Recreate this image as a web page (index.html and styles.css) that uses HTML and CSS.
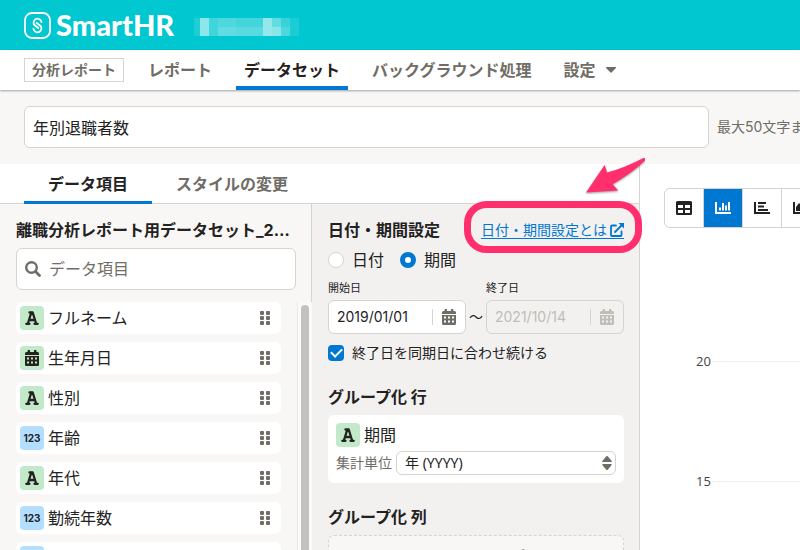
FILE: index.html
```
<!DOCTYPE html>
<html lang="ja">
<head>
<meta charset="utf-8">
<meta name="viewport" content="width=device-width, initial-scale=1">
<title>SmartHR 分析レポート</title>
<link rel="stylesheet" href="styles.css">
</head>
<body>
<svg class="defs" aria-hidden="true">
  <symbol id="cal" viewBox="0 0 14 16"><path d="M3 0h1.6q.4 0 .4.4V2h4V.4Q9 0 9.400 0H11q.4 0 .4.4V2h1.200Q14 2 14 3.500V5H0V3.500Q0 2 1.500 2H2.600V.4Q2.600 0 3 0zM0 6h14v8.500Q14 16 12.500 16h-11Q0 16 0 14.500zM2 7.500v2h2v-2zm4 0v2h2v-2zm4 0v2h2v-2zM2 11.500v2h2v-2zm4 0v2h2v-2zm4 0v2h2v-2z" fill="currentColor" fill-rule="evenodd"/></symbol>
  <symbol id="letter" viewBox="0 0 14 14"><path d="M1.300 12.800H4.500M9.500 12.800H12.700M2.900 12.500L6.300 1.500H7.700L11.100 12.500M4.200 9H9.800M4.500 1.500H7.500" fill="none" stroke="currentColor" stroke-width="2.300" stroke-linecap="round" stroke-linejoin="round"/></symbol>
  <symbol id="grip" viewBox="0 0 10 14"><g fill="currentColor"><rect width="4" height="4" rx="1"/><rect x="6" width="4" height="4" rx="1"/><rect y="5" width="4" height="4" rx="1"/><rect x="6" y="5" width="4" height="4" rx="1"/><rect y="10" width="4" height="4" rx="1"/><rect x="6" y="10" width="4" height="4" rx="1"/></g></symbol>
</svg>

<header class="header">
  <a class="logo" href="#" aria-label="SmartHR">
    <svg width="27" height="27" viewBox="0 0 27 27" fill="none" stroke="#fff"><rect x="1" y="1" width="25" height="25" rx="7" stroke-width="1.800"/><path d="M17.500 10C17 7 13.500 6 11.500 7.200C9 9 9 12 11 13.500L14.300 16M9.500 17C10 20 13.500 21 15.500 19.800C18 18 18 15 16 13.500L12.700 11" stroke-width="1.800" stroke-linecap="round"/></svg>
    <span>SmartHR</span>
  </a>
  <svg class="tenant" width="108" height="18" viewBox="0 0 108 18" fill="#fff" shape-rendering="crispEdges" aria-hidden="true">
    <path d="M0 0h6v18H0z" opacity=".12"/><path d="M6 0h9v18H6z" opacity=".55"/><path d="M15 0h9v18h-9z" opacity=".25"/><path d="M24 0h18v9H24z" opacity=".3"/><path d="M24 9h18v9H24z" opacity=".38"/><path d="M42 0h27v9H42z" opacity=".26"/><path d="M42 9h27v9H42z" opacity=".35"/><path d="M69 0h9v18h-9z" opacity=".58"/><path d="M78 0h9v9h-9z" opacity=".38"/><path d="M78 9h9v9h-9z" opacity=".54"/><path d="M87 0h9v9h-9z" opacity=".22"/><path d="M87 9h9v9h-9z" opacity=".3"/><path d="M96 0h9v18h-9z" opacity=".1"/>
  </svg>
</header>

<nav class="nav">
  <span class="app">分析レポート</span>
  <a href="#">レポート</a>
  <a href="#" class="current">データセット</a>
  <a href="#">バックグラウンド処理</a>
  <a href="#">設定 <svg width="10" height="6" viewBox="0 0 10 6"><path d="M0 .5Q0 0 .5 0h9q.5 0 .5.500Q10 1 9.500 1.500L5.500 5.500Q5 6 4.500 5.500L.5 1.500Q0 1 0 .5z" fill="currentColor"/></svg></a>
</nav>

<div class="titlebar">
  <input class="box" type="text" value="年別退職者数" aria-label="データセット名">
  <span class="hint">最大50文字まで</span>
</div>

<main class="main">
  <div class="editor">
    <div class="tabs">
      <button type="button" class="current">データ項目</button>
      <button type="button">スタイルの変更</button>
    </div>
    <div class="columns">
      <section class="source">
        <div class="source-head">
          <h2>離職分析レポート用データセット_2021</h2>
          <label class="box search">
            <svg width="16" height="16" viewBox="0 0 16 16" fill="none" stroke="currentColor"><circle cx="6.500" cy="6.500" r="5.300" stroke-width="2.400"/><path d="M10.500 10.500l4 4" stroke-width="2.800" stroke-linecap="round"/></svg>
            <input type="search" placeholder="データ項目" aria-label="データ項目">
          </label>
        </div>
        <div class="scroller">
          <ul>
            <li><span class="badge"><svg width="14" height="14"><use href="#letter"/></svg></span>フルネーム<svg class="grip" width="10" height="14"><use href="#grip"/></svg></li>
            <li><span class="badge"><svg width="14" height="16"><use href="#cal"/></svg></span>生年月日<svg class="grip" width="10" height="14"><use href="#grip"/></svg></li>
            <li><span class="badge"><svg width="14" height="14"><use href="#letter"/></svg></span>性別<svg class="grip" width="10" height="14"><use href="#grip"/></svg></li>
            <li><span class="badge number">123</span>年齢<svg class="grip" width="10" height="14"><use href="#grip"/></svg></li>
            <li><span class="badge"><svg width="14" height="14"><use href="#letter"/></svg></span>年代<svg class="grip" width="10" height="14"><use href="#grip"/></svg></li>
            <li><span class="badge number">123</span>勤続年数<svg class="grip" width="10" height="14"><use href="#grip"/></svg></li>
            <li><span class="badge number"></span></li>
          </ul>
          <div class="track"><div class="thumb"></div></div>
        </div>
      </section>

      <section class="settings">
        <div class="heading">
          <h2>日付・期間設定</h2>
          <a class="help" href="#">日付・期間設定とは<svg width="14" height="14" viewBox="0 0 14 14" fill="none" stroke="currentColor" stroke-width="1.800"><path d="M6 2.500H2Q1 2.500 1 3.500V12Q1 13 2 13h8.500q1 0 1-1V8.500M5 9l7-7" stroke-linecap="round"/><path d="M8.500 0H14v5.500z" fill="currentColor" stroke="none"/></svg></a>
          <svg class="callout" width="184" height="104" viewBox="0 0 184 104" aria-hidden="true">
            <rect x="6.500" y="54.500" width="171" height="45" rx="19" fill="none" stroke="#ff2f6d" stroke-width="7"/>
            <path class="arrow" d="M125 42.500L143.700 15L146 22.500Q161 19 182.500 8Q185 7.500 184 10.500Q171 23 151.600 34.300L157.300 40.500z" fill="#ff2f6d"/>
          </svg>
        </div>
        <div class="radios">
          <label><input type="radio" name="mode">日付</label>
          <label><input type="radio" name="mode" checked>期間</label>
        </div>
        <div class="dates">
          <label for="from">開始日</label><span></span><label for="to">終了日</label>
          <div class="date"><input id="from" type="text" value="2019/01/01"><svg width="14" height="16"><use href="#cal"/></svg></div>
          <span class="tilde">〜</span>
          <div class="date disabled"><input id="to" type="text" value="2021/10/14" disabled><svg width="14" height="16"><use href="#cal"/></svg></div>
        </div>
        <label class="keep"><input type="checkbox" checked>終了日を同期日に合わせ続ける</label>

        <h2 class="group">グループ化 行</h2>
        <div class="card">
          <div class="field"><span class="badge"><svg width="14" height="14"><use href="#letter"/></svg></span>期間</div>
          <div class="unit">
            <label for="unit">集計単位</label>
            <div class="select">
              <select id="unit"><option>年 (YYYY)</option></select>
              <svg width="10" height="14" viewBox="0 0 10 14" fill="currentColor"><path d="M5 0q.4 0 .7.300L9.700 5Q10.200 6 9 6H1Q-.2 6 .3 5L4.300.3Q4.600 0 5 0zM5 14q.4 0 .7-.3L9.700 9Q10.200 8 9 8H1Q-.2 8 .3 9l4 4.700Q4.600 14 5 14z"/></svg>
            </div>
          </div>
        </div>

        <h2 class="group">グループ化 列</h2>
        <div class="drop">ここにドロップ</div>
      </section>
    </div>
  </div>

  <section class="preview">
    <div class="types">
      <button type="button" aria-label="表"><svg width="16" height="14" viewBox="0 0 16 14"><path d="M1.500 0h13Q16 0 16 1.500v11q0 1.500-1.500 1.500h-13Q0 14 0 12.500v-11Q0 0 1.500 0zM2 4v3h5V4zm7 0v3h5V4zM2 9v3h5V9zm7 0v3h5V9z" fill="currentColor" fill-rule="evenodd"/></svg></button>
      <button type="button" class="current" aria-label="棒グラフ"><svg width="16" height="12" viewBox="0 0 16 12" fill="none" stroke="currentColor" stroke-width="2"><path d="M1 0v11h15M5 8.500V5.500M8 8.500V1M11 8.500V3.500M14 8.500V0"/></svg></button>
      <button type="button" aria-label="横棒グラフ"><svg width="16" height="12" viewBox="0 0 16 12" fill="none" stroke="currentColor" stroke-width="2"><path d="M1 0v11h15M4 1h8M4 4.500h6M4 8h10"/></svg></button>
      <button type="button" aria-label="面グラフ"><svg width="16" height="12" viewBox="0 0 16 12"><path d="M1 0v11h15" fill="none" stroke="currentColor" stroke-width="2"/><path d="M3 9V5l3-4 3 3 2-1 3 3v3z" fill="currentColor"/></svg></button>
    </div>
    <div class="chart">
      <div class="tick">20</div>
      <div class="tick">15</div>
    </div>
  </section>
</main>
</body>
</html>
```
FILE: styles.css
```
* { box-sizing: border-box; }

:root {
  --text: #23221e;
  --grey: #706d65;
  --border: #d6d3d0;
  --blue: #0077d1;
  --band: #f8f7f6;
}

body {
  margin: 0;
  height: 100vh;
  display: flex;
  flex-direction: column;
  overflow: hidden;
  background: #fff;
  color: var(--text);
  font: 16px/20px Inter, "Noto Sans CJK JP", sans-serif;
}

input, button, select { font: inherit; color: inherit; margin: 0; }
h2 { margin: 0; font-size: 16px; line-height: 20px; }
ul { margin: 0; padding: 0; list-style: none; }
svg { flex: none; }
.defs { position: absolute; width: 0; height: 0; }

.header {
  flex: none;
  height: 50px;
  padding: 0 24px;
  display: flex;
  align-items: center;
  gap: 20px;
  background: #00c7d0;
}
.logo {
  display: flex;
  align-items: center;
  gap: 5px;
  color: #fff;
  font: 900 29px/32px Lato, sans-serif;
  text-decoration: none;
}
.tenant { margin-top: 4px; }

.nav {
  flex: none;
  height: 40px;
  padding: 0 24px;
  display: flex;
  align-items: center;
  gap: 16px;
  white-space: nowrap;
  position: relative;
  box-shadow: 0 1px 2px rgba(0, 0, 0, .35);
  font-weight: bold;
}
.app {
  padding: 0 7px;
  border: 1px solid var(--border);
  font-size: 14px;
  line-height: 22px;
  color: var(--grey);
}
.nav a {
  height: 40px;
  padding: 0 8px;
  display: flex;
  align-items: center;
  gap: 11px;
  color: var(--grey);
  text-decoration: none;
}
.nav a.current { color: var(--text); box-shadow: inset 0 -4px var(--blue); }

.titlebar {
  flex: none;
  padding: 16px 0 16px 24px;
  display: flex;
  align-items: center;
  gap: 8px;
  background: var(--band);
}
.box {
  flex: 1;
  min-width: 0;
  height: 42px;
  padding: 0 8px;
  border: 1px solid var(--border);
  border-radius: 6px;
  background: #fff;
}
.hint {
  flex: 0 0 83px;
  overflow: hidden;
  white-space: nowrap;
  font-size: 14px;
  color: var(--grey);
}

.main { flex: 1; min-height: 0; display: flex; }
.editor {
  flex: 0 0 640px;
  min-width: 0;
  display: flex;
  flex-direction: column;
  border-right: 1px solid var(--border);
}
.tabs {
  flex: none;
  height: 40px;
  padding: 0 24px;
  display: flex;
  border-bottom: 1px solid var(--border);
}
.tabs button {
  height: 40px;
  padding: 0 24px;
  border: 0;
  background: none;
  font-weight: bold;
  color: var(--grey);
}
.tabs .current { color: var(--text); box-shadow: inset 0 -3px var(--blue); }

.columns { flex: 1; min-height: 0; display: flex; }
.source {
  flex: 0 0 312px;
  min-width: 0;
  display: flex;
  flex-direction: column;
  background: var(--band);
}
.source-head {
  padding: 16px 15px 12px 16px;
  border-right: 1px solid var(--border);
}
.source-head h2 { overflow: hidden; white-space: nowrap; text-overflow: ellipsis; }
.search {
  margin-top: 8px;
  display: flex;
  align-items: center;
  gap: 8px;
  color: var(--grey);
}
.search input {
  flex: 1;
  min-width: 0;
  padding: 0;
  border: 0;
  outline: 0;
  background: none;
}
.search input::placeholder { color: var(--grey); }

.scroller { flex: 1; min-height: 0; display: flex; }
.scroller ul { flex: 1; padding: 0 16px; overflow: hidden; }
.scroller li {
  height: 32px;
  margin-bottom: 8px;
  padding: 4px;
  display: flex;
  align-items: center;
  gap: 4px;
  border-radius: 6px;
  background: #fff;
}
.grip { margin: 0 7px 0 auto; color: var(--grey); }
.track {
  flex: 0 0 15px;
  padding: 3px 3px 0;
  border-left: 1px solid #e8e8e8;
  background: #fafafa;
}
.thumb { height: 100%; border-radius: 4px 4px 0 0; background: #c1c1c1; }

.badge {
  width: 24px;
  height: 24px;
  flex: none;
  display: flex;
  align-items: center;
  justify-content: center;
  border-radius: 4px;
  background: #c1e9ca;
}
.badge.number { background: #b2dfff; font-size: 10px; font-weight: bold; }

.settings { flex: 1; min-width: 0; padding: 16px 15px 0 16px; background: #f2f1f0; }
.heading {
  display: flex;
  justify-content: space-between;
  align-items: center;
  white-space: nowrap;
  position: relative;
}
.help {
  display: flex;
  align-items: center;
  gap: 3px;
  border-bottom: 1px solid var(--blue);
  font-size: 14px;
  line-height: 16px;
  color: var(--blue);
  text-decoration: none;
}
.callout { position: absolute; right: -21px; top: -70px; pointer-events: none; }
.arrow { filter: drop-shadow(0 1px 1px rgba(0, 0, 0, .4)); }

.radios { margin-top: 10px; display: flex; gap: 16px; }
.radios label, .keep { display: flex; align-items: center; gap: 8px; }
.radios input, .keep input {
  appearance: none;
  width: 16px;
  height: 16px;
  border: 1px solid var(--border);
  border-radius: 50%;
  background: #fff;
}
.radios input:checked { border: 5px solid var(--blue); }

.dates {
  margin-top: 12px;
  display: grid;
  grid-template-columns: minmax(0, 1fr) 20px minmax(0, 1fr);
  row-gap: 6px;
}
.dates label { font-size: 11px; line-height: 12px; }
.tilde { text-align: center; font-size: 14px; line-height: 34px; }
.date {
  height: 34px;
  padding: 0 9px 0 8px;
  display: flex;
  align-items: center;
  gap: 9px;
  border: 1px solid var(--border);
  border-radius: 6px;
  background: #fff;
  color: var(--grey);
}
.date input {
  flex: 1;
  min-width: 0;
  height: 16px;
  padding: 0;
  border: 0;
  border-right: 1px solid var(--border);
  background: none;
  font-size: 14px;
  color: var(--text);
}
.date.disabled, .date.disabled input { background: #f2f1f0; color: #c1bdb7; }

.keep { margin-top: 8px; font-size: 14px; line-height: 21px; }
.keep input { border-radius: 4px; }
.keep input:checked {
  border: 0;
  background: var(--blue);
  display: grid;
  place-items: center;
}
.keep input:checked::before {
  content: "";
  width: 9px;
  height: 5px;
  margin-bottom: 2px;
  border: solid #fff;
  border-width: 0 0 2px 2px;
  transform: rotate(-45deg);
}

.group { margin: 24px 0 8px; }
.card { padding: 8px; border-radius: 6px; background: #fff; }
.field, .unit { display: flex; align-items: center; gap: 4px; }
.unit { margin-top: 4px; font-size: 14px; color: var(--grey); }
.select { flex: 1; position: relative; display: flex; }
.select select {
  appearance: none;
  width: 100%;
  height: 24px;
  padding: 0 8px;
  border: 1px solid var(--border);
  border-radius: 6px;
  background: #fff;
  font-family: "Noto Sans", "Noto Sans CJK JP", sans-serif;
  color: var(--text);
}
.select svg { position: absolute; right: 4px; top: 5px; pointer-events: none; color: var(--grey); }
.drop {
  padding: 10px;
  border: 1px dashed var(--border);
  border-radius: 6px;
  background: var(--band);
  text-align: center;
  font-size: 14px;
  color: var(--grey);
}

.preview { flex: 1; min-width: 0; padding: 24px 0 0 24px; overflow: hidden; }
.types { display: flex; }
.types button {
  flex: none;
  width: 40px;
  height: 40px;
  margin-right: -1px;
  padding: 0;
  display: flex;
  align-items: center;
  justify-content: center;
  border: 1px solid var(--border);
  background: #fff;
}
.types button:first-child { border-radius: 6px 0 0 6px; }
.types .current { background: var(--blue); color: #fff; }

.chart {
  margin-top: 123px;
  padding-left: 32px;
  display: flex;
  flex-direction: column;
  gap: 100px;
  font: 13px/20px "Open Sans", sans-serif;
  color: #444;
}
.tick { display: flex; align-items: center; gap: 1px; }
.tick::after { content: ""; flex: 1; height: 1px; background: #eee; }
```
